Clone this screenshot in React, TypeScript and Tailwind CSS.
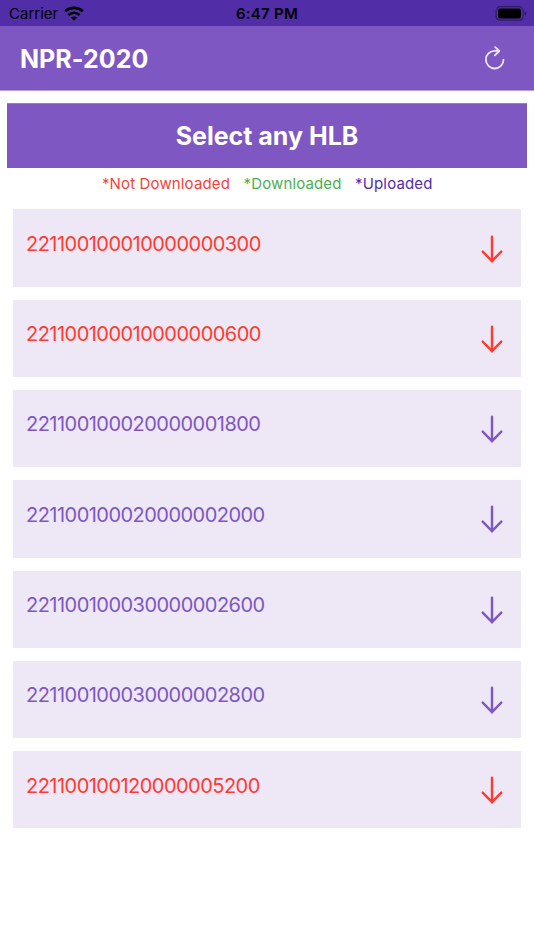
const rows = [
  { id: '221100100010000000300', downloaded: false },
  { id: '221100100010000000600', downloaded: false },
  { id: '221100100020000001800', downloaded: true },
  { id: '221100100020000002000', downloaded: true },
  { id: '221100100030000002600', downloaded: true },
  { id: '221100100030000002800', downloaded: true },
  { id: '221100100120000005200', downloaded: false },
];

function WifiIcon() {
  return (
    <svg width="20" height="15" viewBox="0 0 20 15" fill="none" stroke="currentColor" strokeWidth="2.7" className="block">
      <path d="M1.2 5.3C6.1.8 13.9.8 18.8 5.3" />
      <path d="M4.4 8.9c3.2-2.9 8-2.9 11.2 0" />
      <path d="M10 14.7 6.9 11.6c1.8-1.6 4.4-1.6 6.2 0Z" fill="currentColor" stroke="none" />
    </svg>
  );
}

function BatteryIcon() {
  return (
    <svg width="32" height="15" viewBox="0 0 32 15" className="block">
      <rect x="1.1" y="0.7" width="27" height="13.4" rx="3.8" fill="none" stroke="#000" strokeOpacity="0.4" strokeWidth="1.2" />
      <rect x="3" y="2.4" width="23" height="10" rx="2" fill="#000" />
      <path d="M29.7 5.2c2.1.8 2.1 3.6 0 4.4Z" fill="#000" fillOpacity="0.45" />
    </svg>
  );
}

function RefreshIcon() {
  return (
    <svg width="20" height="24" viewBox="0 0 20 24" fill="none" stroke="currentColor" strokeWidth="1.8" strokeLinecap="round" strokeLinejoin="round" className="block">
      <path d="M18.5 13.7a8.8 8.8 0 1 1-8.8-8.8h4.4" />
      <path d="M10.2 1.2 14.3 5 9.8 9.4" />
    </svg>
  );
}

function DownArrow() {
  return (
    <svg width="22" height="28" viewBox="0 0 22 28" fill="none" stroke="currentColor" strokeWidth="2.4" strokeLinecap="round" strokeLinejoin="round" className="block">
      <path d="M11 1.8v24.6M1.7 16.6l9.3 9.5 9.3-9.5" />
    </svg>
  );
}

export default function App() {
  return (
    <div className="h-[950px] w-[534px] overflow-hidden bg-white font-['Inter',sans-serif]">
      <div className="grid h-[26px] grid-cols-3 items-center bg-[#512da8] pl-[9px] pr-[7px] text-black">
        <div className="flex items-center gap-[6px] text-[15px]">
          <span className="pt-[2px]">Carrier</span>
          <WifiIcon />
        </div>
        <div className="pt-[2px] text-center text-[15px] font-semibold tracking-[0.25px]"><span className="mr-[2px]">6:47 PM</span></div>
        <div className="flex justify-end"><BatteryIcon /></div>
      </div>
      <header className="flex h-[65px] items-center justify-between border-b border-[#b79fdd] bg-[#7e57c2] pl-5 pr-[29px] text-white">
        <h1 className="pt-[3px] text-[25px] font-bold tracking-[0.05px]">NPR-2020</h1>
        <button className="text-[#ede7f6]"><RefreshIcon /></button>
      </header>
      <h2 className="mx-[7px] mt-3 flex h-[65px] items-center justify-center border-t border-[#9b7dd0] bg-[#7e57c2] pt-px text-[25px] font-bold text-white">Select any HLB</h2>
      <div className="flex h-[41.25px] justify-center gap-[13.5px] pl-[0.5px] pt-1 text-[15px] leading-6 tracking-[0.14px]">
        <span className="text-[#f44336]">*Not Downloaded</span>
        <span className="text-[#4caf50]">*Downloaded</span>
        <span className="text-[#512da8]">*Uploaded</span>
      </div>
      <div className="flex flex-col gap-[13px] px-[13px]">
        {rows.map((r) => (
          <div key={r.id} className={`flex h-[77.32px] justify-between bg-[#ede7f6] pl-[13px] pr-[18px] ${r.downloaded ? 'text-[#7e57c2]' : 'text-[#ff3b30]'}`}>
            <span className="pt-[19.4px] text-[20px] leading-[30px] tracking-[-0.53px]">{r.id}</span>
            <span className="pt-[25.3px]"><DownArrow /></span>
          </div>
        ))}
      </div>
    </div>
  );
}
